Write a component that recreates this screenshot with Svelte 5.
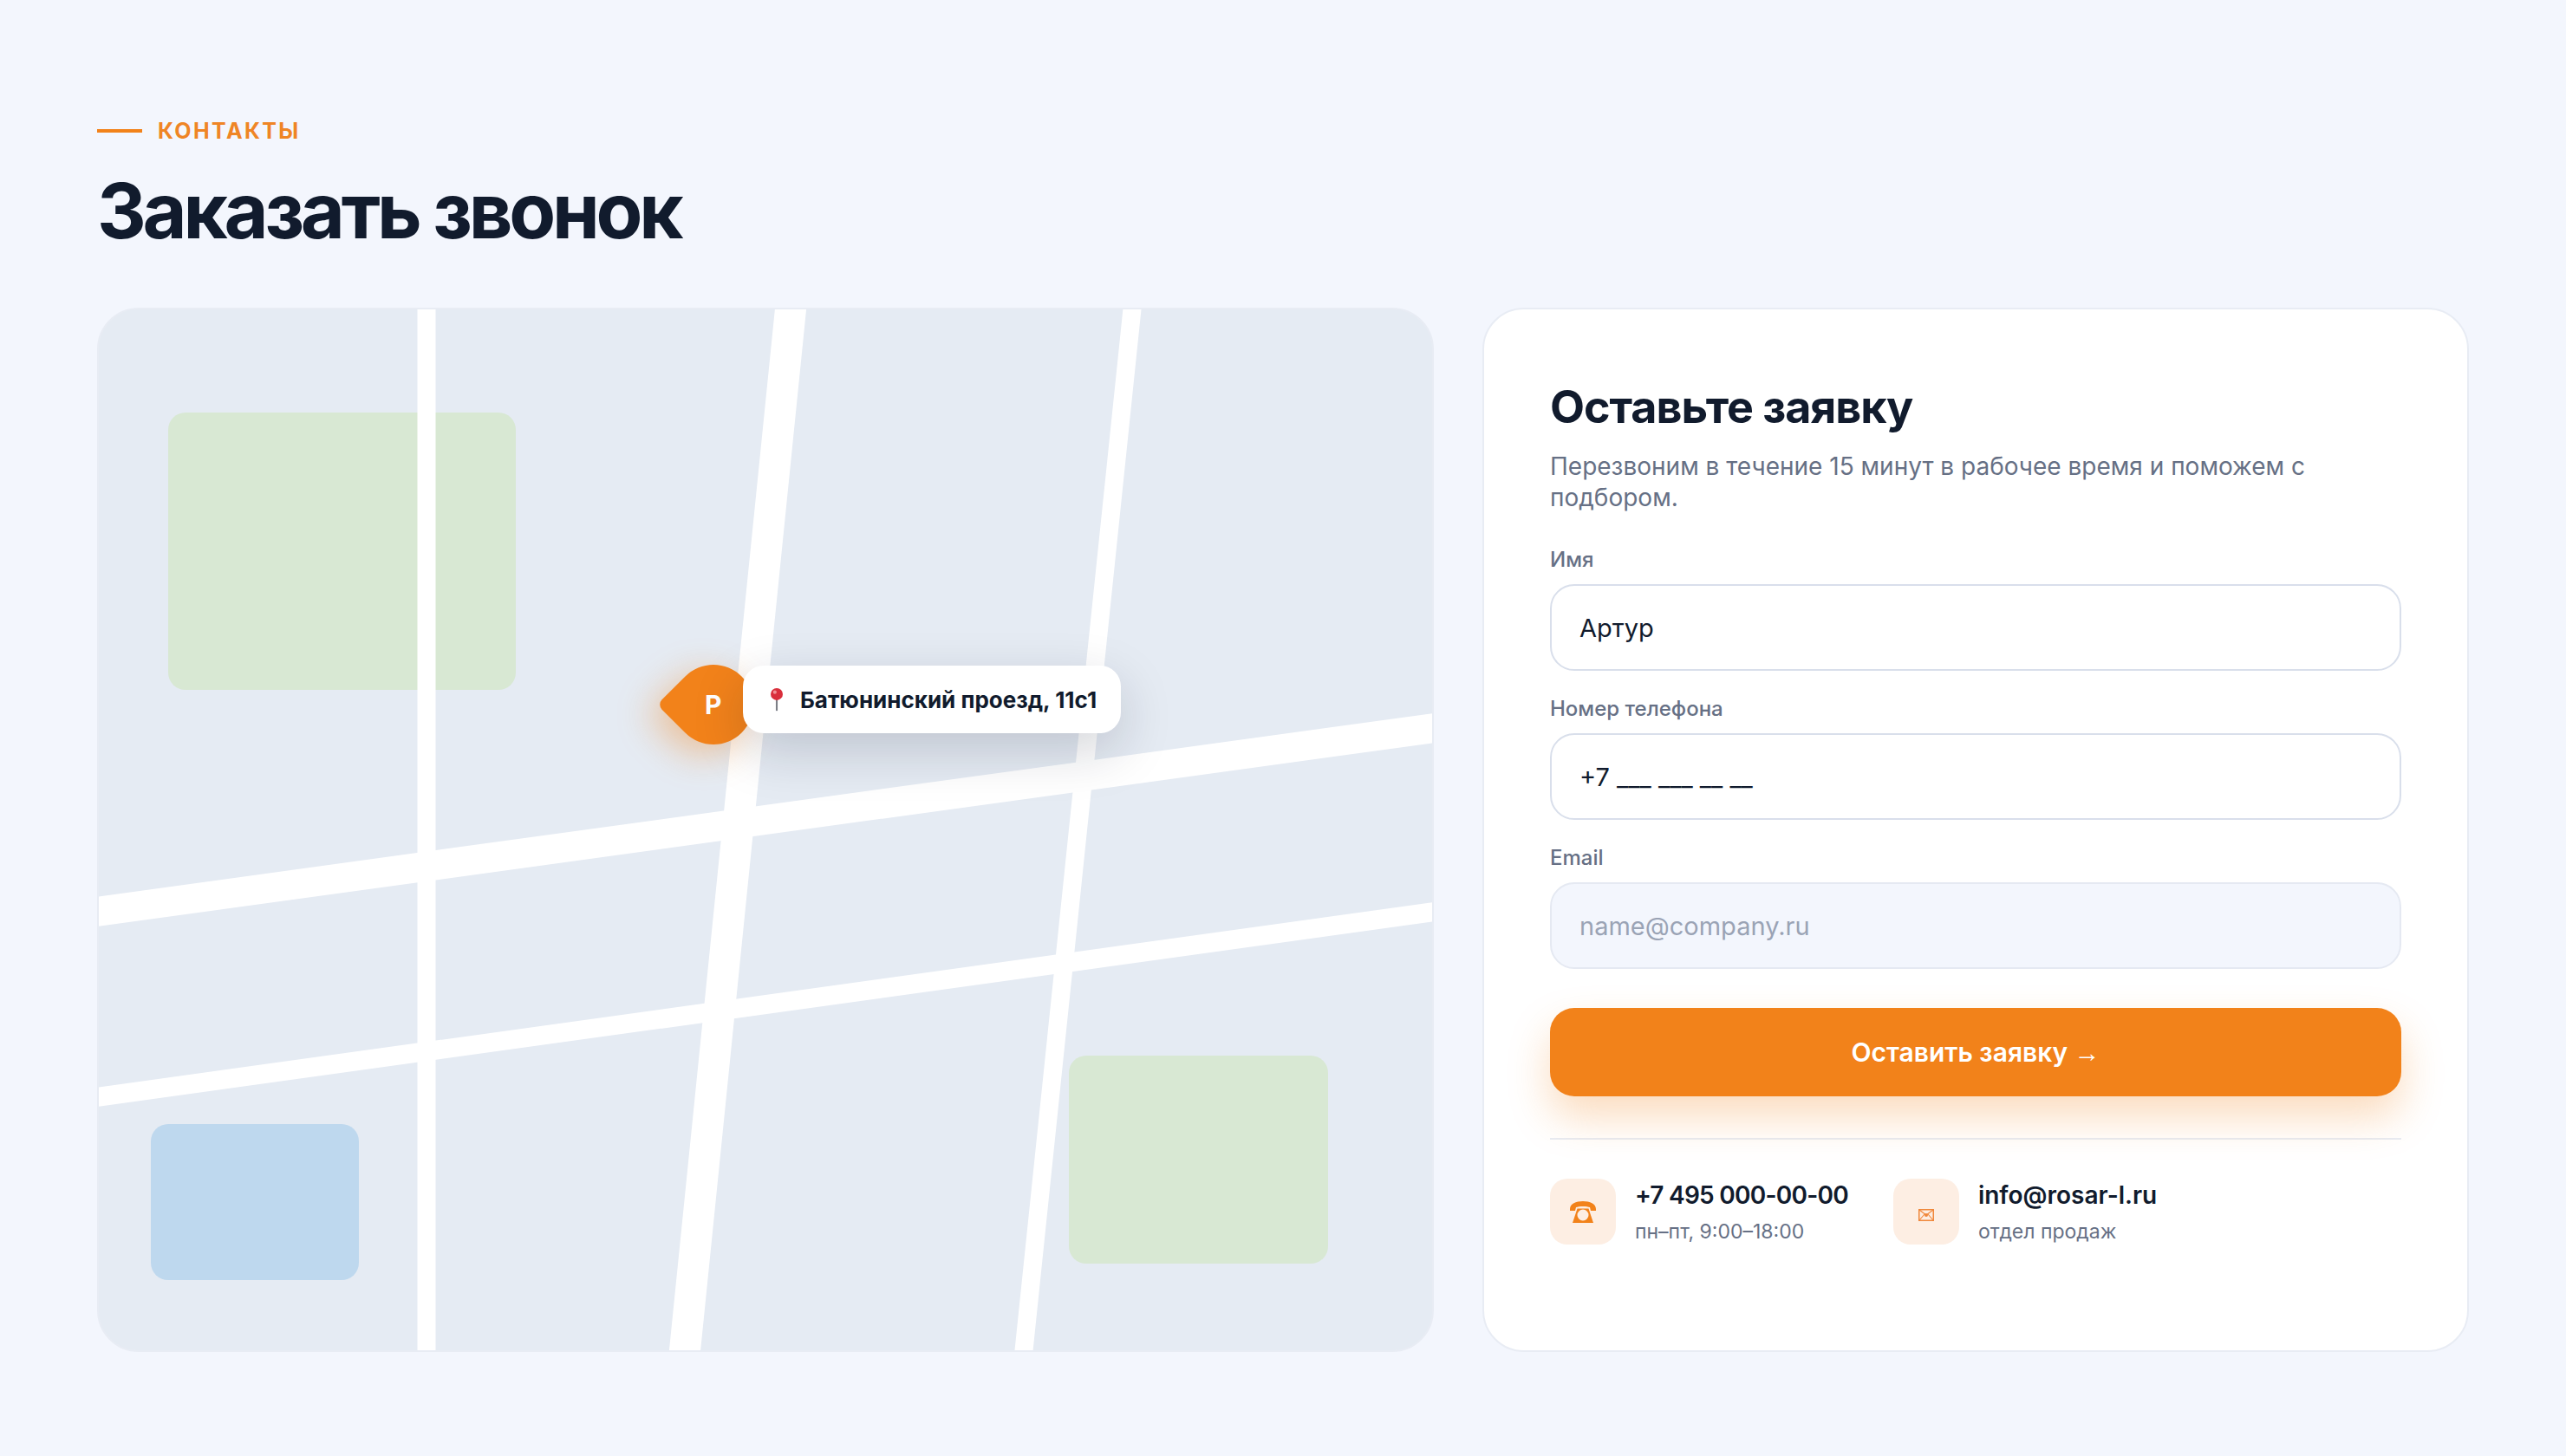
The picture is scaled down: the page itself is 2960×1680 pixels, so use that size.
<script>
  const fields = [
    { label: 'Имя', value: 'Артур', placeholder: '', muted: false },
    { label: 'Номер телефона', value: '+7 ___ ___ __ __', placeholder: '', muted: false },
    { label: 'Email', value: '', placeholder: 'name@company.ru', muted: true }
  ];

  const contacts = [
    { icon: 'phone', title: '+7 495 000-00-00', note: 'пн–пт, 9:00–18:00' },
    { icon: 'mail', title: 'info@rosar-l.ru', note: 'отдел продаж' }
  ];
</script>

<main class="page">
  <header class="head">
    <div class="eyebrow"><span class="dash"></span>КОНТАКТЫ</div>
    <h1>Заказать звонок</h1>
  </header>

  <div class="columns">
    <section class="map">
      <svg class="roads" viewBox="0 0 1538 1201" aria-hidden="true">
        <rect x="80" y="119" width="401" height="320" rx="20" fill="#d8e8d3" />
        <rect x="60" y="940" width="240" height="180" rx="20" fill="#bed8ee" />
        <rect x="1119" y="861" width="299" height="240" rx="20" fill="#d8e8d3" />
        <g stroke="#fff" fill="none">
          <line x1="378" y1="-10" x2="378" y2="1211" stroke-width="21" />
          <line x1="799" y1="-10" x2="675" y2="1211" stroke-width="36" />
          <line x1="1193" y1="-10" x2="1066" y2="1211" stroke-width="21" />
          <line x1="-10" y1="696" x2="1548" y2="482" stroke-width="34" />
          <line x1="-10" y1="910" x2="1548" y2="694" stroke-width="22" />
        </g>
      </svg>

      <div class="spot">
        <div class="marker"><span>Р</span></div>
        <div class="address">
          <svg class="pin" viewBox="0 0 20 32" aria-hidden="true">
            <rect x="8.8" y="14" width="2.4" height="17" fill="#7c7f86" />
            <circle cx="10" cy="9" r="8" fill="#d92f3c" />
            <circle cx="7.5" cy="6.5" r="2.4" fill="#f08f94" />
          </svg>
          <span>Батюнинский проезд, 11с1</span>
        </div>
      </div>
    </section>

    <section class="card">
      <h2>Оставьте заявку</h2>
      <p class="lead">Перезвоним в течение 15 минут в рабочее время и поможем с подбором.</p>

      <form class="form">
        {#each fields as field}
          <label class="field">
            <span class="field-label">{field.label}</span>
            <input class:muted={field.muted} type="text" value={field.value} placeholder={field.placeholder} />
          </label>
        {/each}
        <button type="button" class="submit">Оставить заявку <span class="arrow">→</span></button>
      </form>

      <div class="contacts">
        {#each contacts as item}
          <div class="contact">
            <div class="icon">
              {#if item.icon === 'phone'}
                <svg class="phone" viewBox="0 0 32 25" aria-hidden="true">
                  <path d="M1 11V9C1 3 8 0 16 0s15 3 15 9v2h-6l-1-4C21 5.5 11 5.5 8 7l-1 4z" fill="#f2821a" />
                  <path fill-rule="evenodd" d="M9.5 8.5h13L28 25H4zM16 9.5a6.5 6.5 0 1 0 0 13 6.5 6.5 0 0 0 0-13z" fill="#f2821a" />
                </svg>
              {:else}
                <svg class="mail" viewBox="0 0 18 14" aria-hidden="true">
                  <rect x="0.75" y="0.75" width="16.5" height="12.5" fill="none" stroke="#f0873a" stroke-width="1.5" />
                  <path d="M1 1l8 6 8-6M1 13l6-7M17 13l-6-7" fill="none" stroke="#f0873a" stroke-width="1.1" />
                  <circle cx="9" cy="7" r="2" fill="#f0873a" />
                </svg>
              {/if}
            </div>
            <div class="contact-text">
              <div class="contact-title" class:tight={item.icon === 'phone'}>{item.title}</div>
              <div class="contact-note">{item.note}</div>
            </div>
          </div>
        {/each}
      </div>
    </section>
  </div>
</main>

<style>
  :global(body) {
    margin: 0;
    background: #f3f6fd;
  }

  .page {
    box-sizing: border-box;
    width: 2960px;
    height: 1680px;
    padding: 136px 112px 120px;
    font-family: Inter, 'Noto Sans', sans-serif;
    color: #111b2d;
  }

  .eyebrow {
    display: flex;
    align-items: center;
    gap: 18px;
    height: 30px;
    font-size: 25px;
    font-weight: 700;
    letter-spacing: 0.095em;
    color: #ef8525;
  }

  .dash {
    width: 52px;
    height: 4px;
    background: #f2821a;
  }

  h1 {
    margin: 29px 0 0;
    font-size: 88px;
    line-height: 96px;
    font-weight: 700;
    letter-spacing: -0.048em;
  }

  .columns {
    display: grid;
    grid-template-columns: 1542px 1fr;
    gap: 56px;
    height: 1205px;
    margin-top: 64px;
  }

  .map {
    position: relative;
    box-sizing: border-box;
    border: 2px solid #e8ecf4;
    border-radius: 48px;
    overflow: hidden;
    background: #e5ebf3;
  }

  .roads {
    position: absolute;
    inset: 0;
    width: 100%;
    height: 100%;
    display: block;
  }

  .spot {
    position: absolute;
    left: 663px;
    top: 410px;
    display: flex;
    align-items: flex-start;
  }

  .marker {
    display: flex;
    align-items: center;
    justify-content: center;
    width: 92px;
    height: 92px;
    border-radius: 50% 50% 50% 8px;
    background: #f2821a;
    box-shadow: 0 16px 40px rgba(242, 130, 26, 0.4);
    transform: rotate(45deg);
  }

  .marker span {
    transform: rotate(-45deg);
    font-size: 30px;
    font-weight: 700;
    color: #fff;
  }

  .address {
    position: relative;
    display: flex;
    align-items: center;
    gap: 18px;
    box-sizing: border-box;
    height: 78px;
    margin: 1px 0 0 -12px;
    padding: 0 28px 0 30px;
    border-radius: 24px;
    background: #fff;
    box-shadow: 0 20px 60px rgba(15, 23, 42, 0.18);
    font-size: 26px;
    font-weight: 700;
    white-space: nowrap;
  }

  .pin {
    width: 18px;
    height: 28px;
  }

  .card {
    box-sizing: border-box;
    padding: 82px 76px 0;
    border: 2px solid #e8ecf4;
    border-radius: 48px;
    background: #fff;
  }

  h2 {
    margin: 0;
    font-size: 52px;
    line-height: 62px;
    font-weight: 700;
    letter-spacing: -0.02em;
  }

  .lead {
    margin: 19px 0 0;
    font-size: 28px;
    line-height: 36px;
    color: #667085;
  }

  .form {
    display: flex;
    flex-direction: column;
    margin-top: 35px;
  }

  .field {
    display: flex;
    flex-direction: column;
    gap: 9px;
    margin-bottom: 25px;
  }

  .field-label {
    font-size: 24px;
    line-height: 38px;
    font-weight: 500;
    color: #667085;
  }

  input {
    box-sizing: border-box;
    width: 100%;
    height: 100px;
    padding: 0 32px;
    border: 2px solid #d9dfeb;
    border-radius: 28px;
    outline: none;
    background: #fff;
    font: 400 29px Inter, 'Noto Sans', sans-serif;
    color: #111b2d;
  }

  input.muted {
    border-color: #e5e9f2;
    background: #f3f6fd;
  }

  input::placeholder {
    color: #9aa3b5;
  }

  .submit {
    height: 102px;
    margin-top: 20px;
    border: none;
    border-radius: 28px;
    background: #f2821a;
    box-shadow: 0 24px 48px rgba(242, 130, 26, 0.28);
    font: 600 30px Inter, 'Noto Sans', sans-serif;
    color: #fff;
  }

  .arrow {
    font-family: 'Liberation Sans', sans-serif;
    font-weight: 700;
  }

  .contacts {
    display: flex;
    gap: 52px;
    margin-top: 48px;
    padding-top: 44px;
    border-top: 2px solid #e8ecf4;
  }

  .contact {
    display: flex;
    align-items: center;
    gap: 22px;
  }

  .icon {
    display: flex;
    align-items: center;
    justify-content: center;
    width: 76px;
    height: 76px;
    border-radius: 20px;
    background: #fdeee3;
  }

  .phone {
    width: 32px;
    height: 25px;
  }

  .mail {
    width: 18px;
    height: 14px;
    margin-top: 8px;
  }

  .contact-title {
    font-size: 28px;
    line-height: 40px;
    font-weight: 600;
  }

  .contact-title.tight {
    letter-spacing: -0.75px;
  }

  .contact-note {
    margin-top: 6px;
    font-size: 23px;
    line-height: 32px;
    color: #667085;
  }
</style>
